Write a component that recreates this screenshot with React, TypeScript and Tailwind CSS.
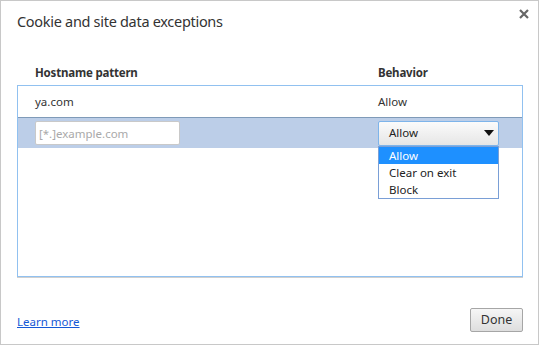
const font = { fontFamily: '"Noto Sans", "Open Sans", sans-serif' };

const options = ["Allow", "Clear on exit", "Block"];

export default function App() {
  return (
    <div
      className="relative w-[539px] h-[345px] bg-white border border-[#c8c8c8] flex flex-col text-[#333] text-[11.5px]"
      style={font}
    >
      <div className="pl-[16px] pt-[10px] h-[64px] text-[14.5px] tracking-[-0.3px] text-[#333]">
        Cookie and site data exceptions
      </div>
      <button className="absolute top-[8px] right-[9px]">
        <svg width="10" height="10" viewBox="0 0 10 10">
          <path d="M1 1L9 9M9 1L1 9" stroke="#666" strokeWidth="2.2" />
        </svg>
      </button>

      <div className="ml-[16px] w-[506px] flex font-bold text-[#333] h-[20px] leading-[16px] tracking-[-0.2px]">
        <div className="w-[361px] pl-[18px]">Hostname pattern</div>
        <div>Behavior</div>
      </div>

      <div className="relative ml-[16px] w-[506px] h-[192px] border border-[#91c1f0] shadow-[0_1px_0_#d0d0d0]">
        <div className="flex items-center h-[31px] text-[#333]">
          <div className="w-[360px] pl-[17px]">ya.com</div>
          <div>Allow</div>
        </div>
        <div className="flex items-center h-[31px] bg-[#bccee8] border-t border-[#7f9ab8]">
          <div className="w-[360px] pl-[17px]">
            <input
              className="w-[145px] h-[24px] bg-white border border-[#c9c9c9] rounded-[2px] px-[3px] text-[11.5px] placeholder:text-[#a9a9a9] outline-none"
              placeholder="[*.]example.com"
              style={font}
            />
          </div>
          <div className="relative">
            <div className="w-[121px] h-[25px] border border-[#7eb4ea] rounded-[2px] bg-gradient-to-b from-[#fbfbfb] to-[#e6e6e6] flex items-center justify-between pl-[10px] pr-[4px] text-[#222]">
              <span>Allow</span>
              <svg width="10" height="6" viewBox="0 0 10 6">
                <path d="M0 0h10L5 6z" fill="#111" />
              </svg>
            </div>
            <div className="absolute top-[25px] left-0 w-[121px] bg-white border border-[#7a9fd6] z-10">
              {options.map((o, i) => (
                <div
                  key={o}
                  className={
                    i === 0
                      ? "h-[17px] leading-[17px] pl-[10px] bg-[#1e90ff] text-white"
                      : "h-[17px] leading-[17px] pl-[10px] text-[#222]"
                  }
                >
                  {o}
                </div>
              ))}
            </div>
          </div>
        </div>
      </div>

      <div className="flex items-end justify-between ml-[16px] w-[506px] mt-auto mb-[12px]">
        <a className="text-[#1558d6] underline mb-[2px]" href="#">
          Learn more
        </a>
        <button
          className="w-[53px] h-[24px] border border-[#a6a6a6] rounded-[2px] bg-gradient-to-b from-[#f6f6f6] to-[#dedede] text-[12.5px] text-[#333]"
          style={font}
        >
          Done
        </button>
      </div>
    </div>
  );
}
